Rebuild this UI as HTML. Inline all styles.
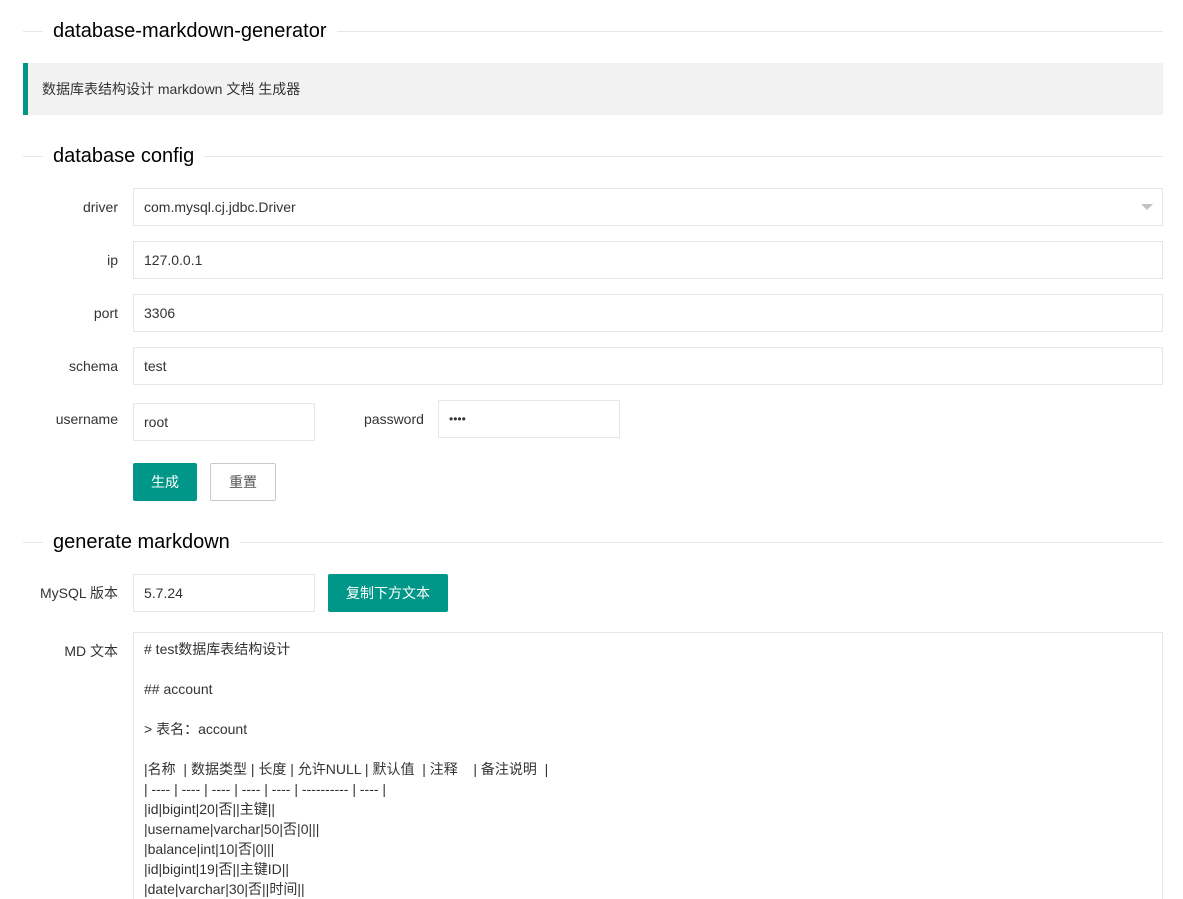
<!DOCTYPE html>
<html><head><meta charset="utf-8"><style>
*{box-sizing:border-box;margin:0;padding:0}
html,body{width:1183px;height:899px;overflow:hidden}
body{background:#fff;font-family:"Liberation Sans","Noto Sans CJK SC",sans-serif;color:#333;font-size:14px;position:relative}
.a{position:absolute}
.hr{position:absolute;left:23px;width:1140px;height:1px;background:#e6e6e6}
.lg{position:absolute;left:43px;padding:0 10px;background:#fff;font-size:20px;color:#000;line-height:24px}
.in{position:absolute;border:1px solid #e6e6e6;height:38px;background:#fff;padding-left:10px;line-height:36px;color:#333}
.lb{position:absolute;width:118px;text-align:right;line-height:20px;color:#333}
.btn{position:absolute;height:38px;line-height:38px;text-align:center;background:#009688;color:#fff;border-radius:2px}
.ta{position:absolute;left:133px;top:632px;width:1030px;height:290px;border:1px solid #e6e6e6;padding:6px 10px;line-height:20px;white-space:pre;color:#333}
</style></head><body>
<div class="hr" style="top:31px"></div><div class="lg" style="top:19px">database-markdown-generator</div>
<div class="a" style="left:23px;top:63px;width:1140px;height:52px;background:#f2f2f2;border-left:5px solid #009688;padding-left:14px;line-height:52px;font-size:14px;color:#333">数据库表结构设计 markdown 文档 生成器</div>
<div class="hr" style="top:156px"></div><div class="lg" style="top:144px">database config</div>
<div class="lb" style="top:197px">driver</div><div class="in" style="left:133px;top:188px;width:1030px">com.mysql.cj.jdbc.Driver</div>
<div class="a" style="left:1141px;top:204px;width:0;height:0;border-left:6px solid transparent;border-right:6px solid transparent;border-top:6px solid #c2c2c2"></div>
<div class="lb" style="top:250px">ip</div><div class="in" style="left:133px;top:241px;width:1030px">127.0.0.1</div>
<div class="lb" style="top:303px">port</div><div class="in" style="left:133px;top:294px;width:1030px">3306</div>
<div class="lb" style="top:356px">schema</div><div class="in" style="left:133px;top:347px;width:1030px">test</div>
<div class="lb" style="top:409px">username</div><div class="in" style="left:133px;top:403px;width:182px">root</div>
<div class="a" style="left:364px;top:409px;line-height:20px">password</div><div class="in" style="left:438px;top:400px;width:182px;font-size:12px">••••</div>
<div class="btn" style="left:133px;top:463px;width:64px">生成</div>
<div class="btn" style="left:210px;top:463px;width:66px;background:#fff;color:#555;border:1px solid #c9c9c9;line-height:36px">重置</div>
<div class="hr" style="top:542px"></div><div class="lg" style="top:530px">generate markdown</div>
<div class="lb" style="top:583px">MySQL 版本</div><div class="in" style="left:133px;top:574px;width:182px">5.7.24</div>
<div class="btn" style="left:328px;top:574px;width:120px">复制下方文本</div>
<div class="lb" style="top:641px">MD 文本</div>
<div class="ta"># test数据库表结构设计

## account

&gt; 表名：account

|名称  | 数据类型 | 长度 | 允许NULL | 默认值  | 注释    | 备注说明  |
| ---- | ---- | ---- | ---- | ---- | ---------- | ---- |
|id|bigint|20|否||主键||
|username|varchar|50|否|0|||
|balance|int|10|否|0|||
|id|bigint|19|否||主键ID||
|date|varchar|30|否||时间||</div>
</body></html>
